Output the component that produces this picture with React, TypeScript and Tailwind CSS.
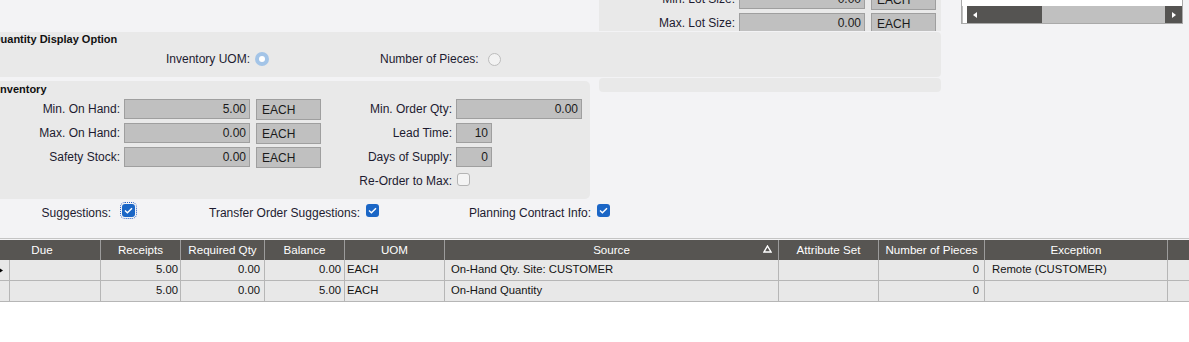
import React from "react";

const Check = () => (
  <svg width="9" height="7" viewBox="0 0 9 7" fill="none">
    <path d="M1 3.6 L3.4 5.8 L8 1.2" stroke="white" strokeWidth="1.4" />
  </svg>
);

const CheckedBox = ({ focus }: { focus?: boolean }) => (
  <div
    className={
      "w-[13px] h-[13px] rounded-[3px] bg-[#1b66c6] flex items-center justify-center shrink-0" +
      (focus ? " outline-1 outline-dotted outline-[#2a62c9] outline-offset-1" : "")
    }
  >
    <Check />
  </div>
);

const Input = ({ w, v }: { w: string; v: string }) => (
  <div
    className={`${w} h-[20px] bg-[#c0c0c0] border border-[#9f9f9f] flex items-center justify-end pr-[3px] text-[#1a1a1a] leading-[14px] shrink-0`}
  >
    {v}
  </div>
);

const Unit = () => (
  <div className="w-[65px] h-[21px] bg-[#c0c0c0] border border-[#9f9f9f] flex items-center pl-[5px] text-[#1a1a1a] leading-[14px] shrink-0">
    EACH
  </div>
);

type Row = {
  ind: boolean;
  rec: string;
  req: string;
  bal: string;
  uom: string;
  src: string;
  nop: string;
  exc: string;
};

const rows: Row[] = [
  { ind: true, rec: "5.00", req: "0.00", bal: "0.00", uom: "EACH", src: "On-Hand Qty. Site: CUSTOMER", nop: "0", exc: "Remote (CUSTOMER)" },
  { ind: false, rec: "5.00", req: "0.00", bal: "5.00", uom: "EACH", src: "On-Hand Quantity", nop: "0", exc: "" },
];

export default function App() {
  return (
    <div className="w-[1189px] h-[342px] overflow-hidden bg-[#f3f3f5] font-['Liberation_Sans',Arial,sans-serif] text-[12px] text-[#1d1b30] flex flex-col">
      {/* top row */}
      <div className="flex h-[31px] shrink-0">
        <div className="w-[599px] shrink-0" />
        <div className="w-[342px] h-[31px] bg-[#e9e9e9] overflow-hidden shrink-0">
          <div className="mt-[-11px] flex flex-col">
            {["Min. Lot Size:", "Max. Lot Size:"].map((l) => (
              <div key={l} className="h-[24px] flex items-start">
                <div className="w-[136px] h-[20px] leading-[20px] text-right whitespace-nowrap">{l}</div>
                <div className="ml-[4px]">
                  <Input w="w-[126px]" v="0.00" />
                </div>
                <div className="ml-[6px]">
                  <Unit />
                </div>
              </div>
            ))}
          </div>
        </div>
        <div className="w-[20px] shrink-0" />
        <div className="w-[222px] h-[24px] bg-white border-x border-b border-[#a9a9a9] flex flex-col justify-end shrink-0">
          <div className="h-[17px] flex">
            <div className="w-[1px] bg-[#c0c0c0]" />
            <div className="w-[4px] bg-white" />
            <div className="w-[75px] bg-[#555452] flex items-center pl-[6px]">
              <svg width="4" height="6" viewBox="0 0 4 6">
                <path d="M4 0 L0 3 L4 6 Z" fill="white" />
              </svg>
            </div>
            <div className="w-[123px] bg-[#c0c0c0]" />
            <div className="w-[17px] bg-[#555452] flex items-center pl-[7px]">
              <svg width="4" height="6" viewBox="0 0 4 6">
                <path d="M0 0 L4 3 L0 6 Z" fill="white" />
              </svg>
            </div>
          </div>
        </div>
      </div>

      {/* Quantity display option */}
      <div className="mt-[1px] w-[941px] h-[45px] bg-[#e9e9e9] rounded-r-[4px] shrink-0">
        <div className="ml-[-8px] text-[11px] font-bold leading-[14px] whitespace-nowrap text-[#111]">
          Quantity Display Option
        </div>
        <div className="mt-[3px] h-[20px] flex items-center">
          <div className="w-[250px] text-right whitespace-nowrap">Inventory UOM:</div>
          <div className="ml-[5px] w-[14px] h-[14px] rounded-full bg-[#a3c4e7] flex items-center justify-center">
            <div className="w-[6px] h-[6px] rounded-full bg-white" />
          </div>
          <div className="ml-[111px] w-[103px] whitespace-nowrap">Number of Pieces:</div>
          <div className="ml-[5px] w-[13px] h-[13px] rounded-full border border-[#bcbcbc] bg-[#f2f2f2]" />
        </div>
      </div>

      {/* Inventory + small panel */}
      <div className="mt-[1px] flex items-start shrink-0">
        <div className="mt-[3px] w-[590px] h-[118px] bg-[#e9e9e9] rounded-r-[5px] pt-[1px] shrink-0">
          <div className="ml-[-3px] text-[11px] font-bold leading-[14px] text-[#111]">Inventory</div>
          <div className="mt-[3px] flex flex-col">
            <div className="h-[24px] flex items-start">
              <div className="w-[120px] h-[20px] leading-[20px] text-right">Min. On Hand:</div>
              <div className="ml-[4px]"><Input w="w-[126px]" v="5.00" /></div>
              <div className="ml-[6px]"><Unit /></div>
              <div className="w-[131px] h-[20px] leading-[20px] text-right">Min. Order Qty:</div>
              <div className="ml-[4px]"><Input w="w-[126px]" v="0.00" /></div>
            </div>
            <div className="h-[24px] flex items-start">
              <div className="w-[120px] h-[20px] leading-[20px] text-right">Max. On Hand:</div>
              <div className="ml-[4px]"><Input w="w-[126px]" v="0.00" /></div>
              <div className="ml-[6px]"><Unit /></div>
              <div className="w-[131px] h-[20px] leading-[20px] text-right">Lead Time:</div>
              <div className="ml-[4px]"><Input w="w-[36px]" v="10" /></div>
            </div>
            <div className="h-[24px] flex items-start">
              <div className="w-[120px] h-[20px] leading-[20px] text-right">Safety Stock:</div>
              <div className="ml-[4px]"><Input w="w-[126px]" v="0.00" /></div>
              <div className="ml-[6px]"><Unit /></div>
              <div className="w-[131px] h-[20px] leading-[20px] text-right">Days of Supply:</div>
              <div className="ml-[4px]"><Input w="w-[36px]" v="0" /></div>
            </div>
            <div className="h-[24px] flex items-start">
              <div className="w-[321px]" />
              <div className="w-[131px] h-[20px] leading-[20px] text-right whitespace-nowrap">Re-Order to Max:</div>
              <div className="ml-[5px] mt-[2px] w-[13px] h-[13px] rounded-[3px] border border-[#b4b4b4] bg-[#f4f4f4]" />
            </div>
          </div>
        </div>
        <div className="ml-[9px] w-[342px] h-[14px] bg-[#e9e9e9] rounded-[4px] shrink-0" />
      </div>

      {/* checkbox row */}
      <div className="h-[40px] border-b border-[#c4c4c4] flex items-start pt-[5px] shrink-0">
        <div className="w-[111px] mt-[2px] leading-[14px] text-right whitespace-nowrap">Suggestions:</div>
        <div className="ml-[11px]"><CheckedBox focus /></div>
        <div className="w-[225px] mt-[2px] leading-[14px] text-right whitespace-nowrap">Transfer Order Suggestions:</div>
        <div className="ml-[6px]"><CheckedBox /></div>
        <div className="w-[212px] mt-[2px] leading-[14px] text-right whitespace-nowrap">Planning Contract Info:</div>
        <div className="ml-[6px]"><CheckedBox /></div>
      </div>

      {/* table */}
      <div className="mt-[1px] flex-1 bg-white flex flex-col text-[11.3px]">
        <div className="h-[20px] flex bg-[#575552] text-white text-[11.6px] leading-[14px] shrink-0">
          <div className="w-[101px] border-r border-[#9c9c9c] flex items-center justify-center pr-[16px]">Due</div>
          <div className="w-[80px] border-r border-[#9c9c9c] flex items-center justify-center">Receipts</div>
          <div className="w-[84px] border-r border-[#9c9c9c] flex items-center justify-center">Required Qty</div>
          <div className="w-[80px] border-r border-[#9c9c9c] flex items-center justify-center">Balance</div>
          <div className="w-[100px] border-r border-[#9c9c9c] flex items-center justify-center">UOM</div>
          <div className="relative w-[334px] border-r border-[#9c9c9c] flex items-center justify-center">
            Source
            <svg className="absolute right-[6px] top-[5px]" width="9" height="8" viewBox="0 0 9 8">
              <path d="M4.5 1 L8 7 L1 7 Z" fill="none" stroke="white" strokeWidth="1.4" />
            </svg>
          </div>
          <div className="w-[100px] border-r border-[#9c9c9c] flex items-center justify-center">Attribute Set</div>
          <div className="w-[106px] border-r border-[#9c9c9c] flex items-center justify-center whitespace-nowrap">Number of Pieces</div>
          <div className="w-[183px] border-r border-[#9c9c9c] flex items-center justify-center">Exception</div>
          <div className="flex-1" />
        </div>
        {rows.map((r, i) => (
          <div key={i} className="h-[21px] flex bg-[#e8e8e8] border-b border-[#b6b6b6] text-[#141414] leading-[14px] shrink-0">
            <div className="w-[10px] border-r border-[#b6b6b6] flex items-center overflow-hidden">
              {r.ind && (
                <svg className="ml-[-2px]" width="5" height="7" viewBox="0 0 5 7">
                  <path d="M0 0 L5 3.5 L0 7 Z" fill="black" />
                </svg>
              )}
            </div>
            <div className="w-[91px] border-r border-[#b6b6b6]" />
            <div className="w-[80px] border-r border-[#b6b6b6] pt-[2px] text-right pr-[2px]">{r.rec}</div>
            <div className="w-[84px] border-r border-[#b6b6b6] pt-[2px] text-right pr-[4px]">{r.req}</div>
            <div className="w-[80px] border-r border-[#b6b6b6] pt-[2px] text-right pr-[3px]">{r.bal}</div>
            <div className="w-[100px] border-r border-[#b6b6b6] pt-[2px] pl-[2px]">{r.uom}</div>
            <div className="w-[334px] border-r border-[#b6b6b6] pt-[2px] pl-[6px] whitespace-nowrap">{r.src}</div>
            <div className="w-[100px] border-r border-[#b6b6b6]" />
            <div className="w-[106px] border-r border-[#b6b6b6] pt-[2px] text-right pr-[5px]">{r.nop}</div>
            <div className="w-[183px] border-r border-[#b6b6b6] pt-[2px] pl-[7px] whitespace-nowrap">{r.exc}</div>
            <div className="flex-1" />
          </div>
        ))}
      </div>
    </div>
  );
}
